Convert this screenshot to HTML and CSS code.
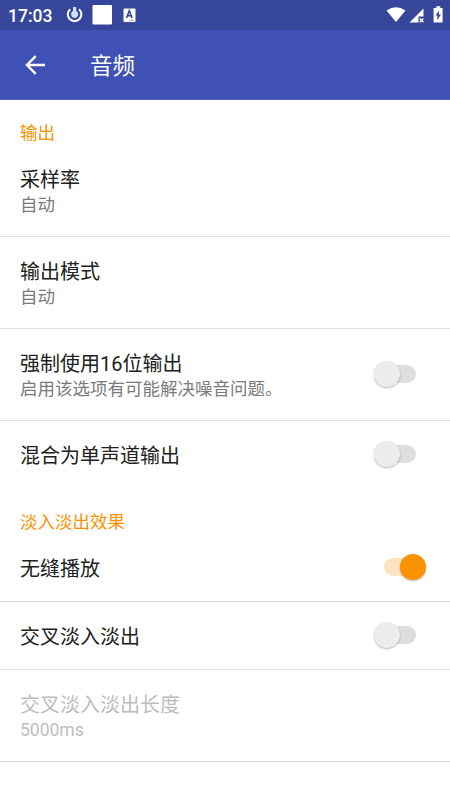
FILE: index.html
```
<!DOCTYPE html>
<html lang="zh-CN">
<head>
<meta charset="utf-8">
<title>音频</title>
<link rel="stylesheet" href="styles.css">
</head>
<body>
<div class="status">
  <span class="clock">17:03</span>
  <svg class="notices" width="66" height="20" viewBox="0 0 66 20">
    <path d="M4.2 4.2A6.8 6.8 0 1 0 13 4.2" fill="none" stroke="#fff" stroke-width="2"/>
    <path d="M7 2h3.2v4.1a3.6 3.6 0 1 1-3.2 0z" fill="#d5dcfa"/>
    <rect x="26.5" y="0" width="19.5" height="19.5" rx="1" fill="#fff"/>
    <rect x="57.5" y="3.5" width="12" height="13.5" rx="1" fill="#fff"/>
    <path d="M60.5 13l2.8-7.2 2.8 7.2M61.5 10.8h3.6" fill="none" stroke="#34448f" stroke-width="1.6"/>
    <path d="M63.5 15.3h4" stroke="#8b95c6"/>
  </svg>
  <svg class="system" width="58" height="20" viewBox="0 0 58 20">
    <path d="M.5 5.5Q10 -.8 19.5 5.5L10 17z" fill="#fff"/>
    <path d="M23.5 17.5L37.5 3.5V11.5h-5v6z" fill="#fff"/>
    <path d="M33.7 13.5l3.7 3.8m0-3.8l-3.7 3.8" stroke="#fff" stroke-width="1.3"/>
    <path d="M50.3 1.2h4v1.8h2.3v14.5h-9V3h2.7z" fill="#fff"/>
    <path d="M53.2 5.4l-3.8 5.2h2.2l-.6 4.7 4-5.7h-2.3z" fill="#34448f"/>
  </svg>
</div>
<header class="bar">
  <svg class="back" width="22" height="20" viewBox="0 0 22 20"><path d="M20 10H2M10.7 1.2L1.9 10l8.8 8.8" fill="none" stroke="#fff" stroke-width="2.4"/></svg>
  <h1>音频</h1>
</header>
<main>
  <h2>输出</h2>
  <div class="row"><div><div class="name">采样率</div><div class="note">自动</div></div></div>
  <div class="row"><div><div class="name">输出模式</div><div class="note">自动</div></div></div>
  <div class="row"><div><div class="name">强制使用16位输出</div><div class="note">启用该选项有可能解决噪音问题。</div></div><span class="switch"></span></div>
  <div class="row last"><div class="name">混合为单声道输出</div><span class="switch"></span></div>
  <h2>淡入淡出效果</h2>
  <div class="row"><div class="name">无缝播放</div><span class="switch on"></span></div>
  <div class="row"><div class="name">交叉淡入淡出</div><span class="switch"></span></div>
  <div class="row disabled"><div><div class="name">交叉淡入淡出长度</div><div class="note">5000ms</div></div></div>
</main>
</body>
</html>
```
FILE: styles.css
```
* { box-sizing: border-box; }
body {
  margin: 0;
  height: 800px;
  overflow: hidden;
  background: #fff;
  font-family: Roboto, "Noto Sans CJK SC", sans-serif;
}
.status {
  height: 30px;
  padding: 0 6px 0 8px;
  display: flex;
  align-items: center;
  background: #36469b;
  color: #fff;
}
.clock { width: 58px; font-size: 17.5px; font-weight: 500; line-height: 30px; padding-top: 2px; }
.notices { overflow: visible; }
.system { margin-left: auto; }
.bar {
  height: 70px;
  padding-left: 25px;
  display: flex;
  align-items: center;
  background: #3f51b5;
  color: #fff;
  border-bottom: 1px solid #5765b9;
}
h1 { margin: 0 0 0 43px; padding-top: 2px; font-size: 22.5px; line-height: 32px; font-weight: 400; }
h2 {
  margin: 0;
  height: 45px;
  padding: 21px 20px 0;
  font-size: 17.5px;
  line-height: 24px;
  font-weight: 400;
  color: #fb9200;
}
.row {
  padding: 22px 24px 18px 20px;
  display: flex;
  align-items: center;
  justify-content: space-between;
  border-bottom: 1px solid #dedede;
}
.last { border-bottom-color: transparent; }
.name { font-size: 20px; line-height: 27px; color: #212121; }
.note { font-size: 17.5px; line-height: 24px; color: #7b7b7b; margin: -1px 0 1px; }
.disabled .name, .disabled .note { color: #bdbdbd; }
.switch {
  position: relative;
  top: -2.5px;
  width: 34px;
  height: 18px;
  margin-right: 10px;
  border-radius: 9px;
  background: #dedede;
}
.switch::before {
  content: "";
  position: absolute;
  left: -8px;
  top: -4px;
  width: 26px;
  height: 26px;
  border-radius: 50%;
  background: #ececec;
  box-shadow: 0 1px 2px rgba(0, 0, 0, .28);
}
.switch.on { background: #fee3c0; margin-right: 8px; }
.switch.on::before { left: 16px; background: #fb9200; }
```
